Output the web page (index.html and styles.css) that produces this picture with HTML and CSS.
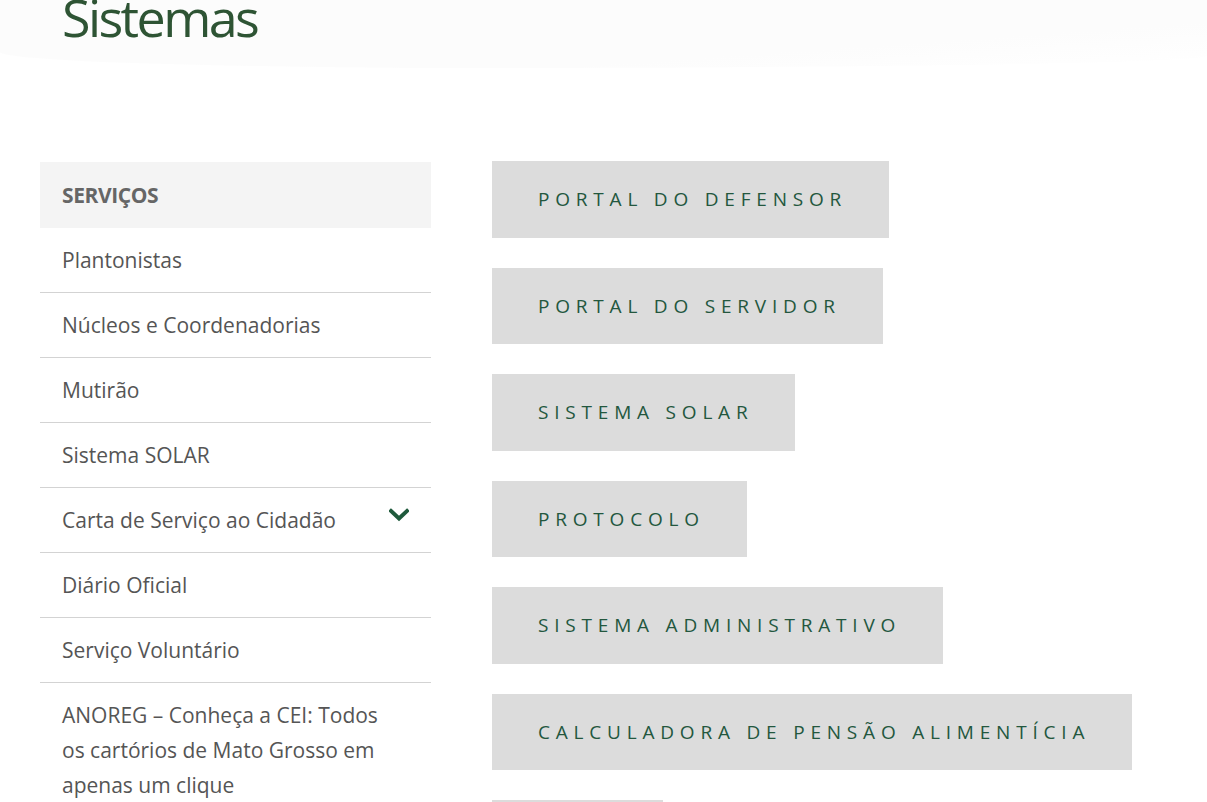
FILE: index.html
```html
<!DOCTYPE html>
<html lang="pt-BR">
<head>
	<meta charset="UTF-8">
	<title>Sistemas</title>
	<link rel="stylesheet" href="styles.css">
</head>
<body>
<div class="page-head">
	<h1 class="page-title">Sistemas</h1>
</div>

<div class="content">
	<!-- menu lateral -->
	<aside class="side">
		<div class="side-title">SERVIÇOS</div>
		<ul class="side-menu">
			<li><a href="#">Plantonistas</a></li>
			<li><a href="#">Núcleos e Coordenadorias</a></li>
			<li><a href="#">Mutirão</a></li>
			<li><a href="#">Sistema SOLAR</a></li>
			<li class="has-sub">
				<a href="#">Carta de Serviço ao Cidadão</a>
				<svg class="arrow" width="20" height="14" viewBox="0 0 20 14"><path d="M2 3 L10 10.5 L18 3" fill="none" stroke="#1f5a3c" stroke-width="4" stroke-linecap="square"/></svg>
			</li>
			<li><a href="#">Diário Oficial</a></li>
			<li><a href="#">Serviço Voluntário</a></li>
			<li><a href="#">ANOREG – Conheça a CEI: Todos os cartórios de Mato Grosso em apenas um clique</a></li>
		</ul>
	</aside>

	<!-- botoes dos sistemas -->
	<div class="systems">
		<a class="sys-btn" href="#">PORTAL DO DEFENSOR</a>
		<a class="sys-btn" href="#">PORTAL DO SERVIDOR</a>
		<a class="sys-btn" href="#">SISTEMA SOLAR</a>
		<a class="sys-btn" href="#">PROTOCOLO</a>
		<a class="sys-btn" href="#">SISTEMA ADMINISTRATIVO</a>
		<a class="sys-btn" href="#">CALCULADORA DE PENSÃO ALIMENTÍCIA</a>
		<a class="sys-btn" href="#">SIGED</a>
	</div>
</div>
</body>
</html>
```

FILE: styles.css
```css
*{margin:0;padding:0;box-sizing:border-box;}
html,body{height:100%;}
body{
	font-family:"Open Sans","Noto Sans",sans-serif;
	background:#fff;
	color:#555;
	overflow:hidden;
}
a{text-decoration:none;color:inherit;}
ul{list-style:none;}

.page-head{
	height:68px;
	padding-left:62px;
	background:linear-gradient(176deg,#fcfcfc 0%,#fcfcfc 70%,#fff 100%);
	border-bottom-right-radius:60% 12px;
	border-bottom-left-radius:40% 16px;
	overflow:hidden;
}
.page-title{
	font-size:52px;
	font-weight:400;
	letter-spacing:-2.6px;
	line-height:1;
	margin-top:-9px;
	color:#2e5434;
}

.content{
	display:flex;
	align-items:flex-start;
	gap:61px;
	padding:94px 0 0 40px;
}

/* sidebar */
.side{width:391px;flex:none;}
.side-title{
	height:66px;
	line-height:66px;
	padding-left:22px;
	background:#f4f4f4;
	font-size:21px;
	font-weight:700;
	letter-spacing:-0.4px;
	color:#666;
}
.side-menu li{
	display:flex;
	justify-content:space-between;
	align-items:flex-start;
	padding:15px 40px 14px 22px;
	border-bottom:1px solid #d3d3d3;
	font-size:21px;
	line-height:35px;
	color:#555;
	position:relative;
}
.side-menu li:last-child{border-bottom:0;}
.side-menu .arrow{
	position:absolute;
	right:22px;
	top:20px;
}

/* botoes */
.systems{
	display:flex;
	flex-direction:column;
	align-items:flex-start;
	gap:30px;
	margin-top:-1px;
}
.sys-btn{
	display:block;
	height:76.5px;
	line-height:76.5px;
	padding:0 42px 0 46px;
	background:#dcdcdc;
	color:#23573e;
	font-size:19px;
	letter-spacing:5.8px;
	white-space:nowrap;
}
```
